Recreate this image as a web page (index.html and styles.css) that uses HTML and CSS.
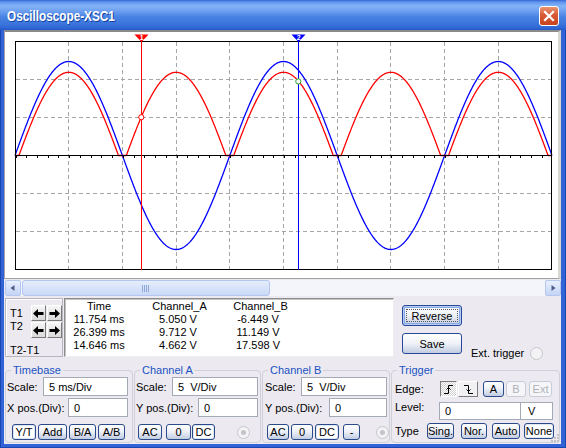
FILE: index.html
```html
<!DOCTYPE html>
<html>
<head>
<meta charset="utf-8">
<title>Oscilloscope-XSC1</title>
<link rel="stylesheet" href="styles.css">
</head>
<body>
<div class="window">
  <div class="titlebar">
    <span class="title">Oscilloscope-XSC1</span>
    <div class="close">
      <svg width="18" height="18" viewBox="0 0 18 18"><path d="M5 5 L13 13 M13 5 L5 13" stroke="#fff" stroke-width="2.2" stroke-linecap="square"/></svg>
    </div>
  </div>
  <div class="client">
    <div class="plot-panel">
      <svg class="plot" width="553" height="246" viewBox="5 32 553 246">
        <g stroke="#a6a6a6" stroke-width="1" stroke-dasharray="4 3" shape-rendering="crispEdges">
          <line x1="68.5" y1="42" x2="68.5" y2="270"/>
          <line x1="122.5" y1="42" x2="122.5" y2="270"/>
          <line x1="176.5" y1="42" x2="176.5" y2="270"/>
          <line x1="229.5" y1="42" x2="229.5" y2="270"/>
          <line x1="283.5" y1="42" x2="283.5" y2="270"/>
          <line x1="337.5" y1="42" x2="337.5" y2="270"/>
          <line x1="390.5" y1="42" x2="390.5" y2="270"/>
          <line x1="444.5" y1="42" x2="444.5" y2="270"/>
          <line x1="498.5" y1="42" x2="498.5" y2="270"/>
          <line x1="16" y1="79.5" x2="552" y2="79.5"/>
          <line x1="16" y1="117.5" x2="552" y2="117.5"/>
          <line x1="16" y1="193.5" x2="552" y2="193.5"/>
          <line x1="16" y1="231.5" x2="552" y2="231.5"/>
        </g>
        <path id="trB" fill="none" stroke="#0000ff" stroke-width="1.3"/>
        <path id="trA" fill="none" stroke="#ff0000" stroke-width="1.3"/>
        <g stroke="#000" shape-rendering="crispEdges" fill="none">
          <line x1="15" y1="155.5" x2="552" y2="155.5"/>
          <line x1="15.5" y1="157" x2="552" y2="157" stroke-width="2" stroke-dasharray="1 9.74"/>
          <rect x="15.5" y="41.5" width="536" height="228"/>
        </g>
        <line x1="141.5" y1="36" x2="141.5" y2="270" stroke="#ff0000" stroke-width="1" shape-rendering="crispEdges"/>
        <line x1="298.5" y1="36" x2="298.5" y2="270" stroke="#0000ff" stroke-width="1" shape-rendering="crispEdges"/>
        <polygon points="134.5,34.5 148.5,34.5 141.5,42" fill="#ff0000"/>
        <polygon points="291.5,34.5 305.5,34.5 298.5,42" fill="#0000ff"/>
        <text class="mk" x="141.6" y="40.2">1</text>
        <text class="mk" x="298.6" y="40.2">2</text>
        <circle cx="141.3" cy="117.2" r="2.6" fill="#fff" stroke="#ff0000" stroke-width="1"/>
        <circle cx="298.3" cy="81.4" r="2.6" fill="#fff" stroke="#22a022" stroke-width="1"/>
      </svg>
    </div>

    <div class="hscroll">
      <div class="sb-btn"><svg width="8" height="8" viewBox="0 0 8 8"><path d="M5.5 1 L1.5 4 L5.5 7 Z" fill="#4d5f86"/></svg></div>
      <div class="sb-track">
        <div class="sb-thumb"><span class="grip"></span></div>
      </div>
      <div class="sb-btn"><svg width="8" height="8" viewBox="0 0 8 8"><path d="M2.5 1 L6.5 4 L2.5 7 Z" fill="#4d5f86"/></svg></div>
    </div>

    <div class="meas">
      <div class="cursor-box">
        <span class="clabel">T1</span>
        <div class="abtn"><svg width="11" height="9" viewBox="0 0 11 9"><path d="M0 4.5 L5 0 L5 3 L10.5 3 L10.5 6 L5 6 L5 9 Z" fill="#000"/></svg></div>
        <div class="abtn"><svg width="11" height="9" viewBox="0 0 11 9"><path d="M11 4.5 L6 0 L6 3 L0.5 3 L0.5 6 L6 6 L6 9 Z" fill="#000"/></svg></div>
        <span class="clabel t2">T2</span>
        <div class="abtn"><svg width="11" height="9" viewBox="0 0 11 9"><path d="M0 4.5 L5 0 L5 3 L10.5 3 L10.5 6 L5 6 L5 9 Z" fill="#000"/></svg></div>
        <div class="abtn"><svg width="11" height="9" viewBox="0 0 11 9"><path d="M11 4.5 L6 0 L6 3 L0.5 3 L0.5 6 L6 6 L6 9 Z" fill="#000"/></svg></div>
        <span class="clabel diff">T2-T1</span>
      </div>
      <div class="readout">
        <div class="rrow"><span>Time</span><span class="ha">Channel_A</span><span class="hb">Channel_B</span></div>
        <div class="rrow"><span>11.754 ms</span><span>5.050 V</span><span>-6.449 V</span></div>
        <div class="rrow"><span>26.399 ms</span><span>9.712 V</span><span>11.149 V</span></div>
        <div class="rrow"><span>14.646 ms</span><span>4.662 V</span><span>17.598 V</span></div>
      </div>
      <div class="actions">
        <button class="pbtn focus">Reverse</button>
        <button class="pbtn">Save</button>
      </div>
      <div class="ext"><span>Ext. trigger</span><span class="radio"></span></div>
    </div>

    <div class="groups">
      <fieldset class="grp g-time">
        <legend>Timebase</legend>
        <div class="row"><span class="lbl">Scale:</span><input class="field w85" value="5 ms/Div" readonly></div>
        <div class="row"><span class="lbl">X pos.(Div):</span><input class="field w60" value="0" readonly></div>
        <div class="brow">
          <button class="btn sel w24">Y/T</button>
          <button class="btn w29 ml2">Add</button>
          <button class="btn w27 ml2">B/A</button>
          <button class="btn w27 ml2">A/B</button>
        </div>
      </fieldset>
      <fieldset class="grp g-cha">
        <legend>Channel A</legend>
        <div class="row"><span class="lbl">Scale:</span><input class="field w86" value="5  V/Div" readonly></div>
        <div class="row"><span class="lbl">Y pos.(Div):</span><input class="field w60" value="0" readonly></div>
        <div class="brow">
          <button class="btn w24">AC</button>
          <button class="btn w25 ml4">0</button>
          <button class="btn sel w23 ml1">DC</button>
          <span class="radio dot ml22"></span>
        </div>
      </fieldset>
      <fieldset class="grp g-chb">
        <legend>Channel B</legend>
        <div class="row"><span class="lbl">Scale:</span><input class="field w86" value="5  V/Div" readonly></div>
        <div class="row"><span class="lbl">Y pos.(Div):</span><input class="field w59" value="0" readonly></div>
        <div class="brow">
          <button class="btn w22">AC</button>
          <button class="btn w22 ml2">0</button>
          <button class="btn sel w24 ml2">DC</button>
          <button class="btn w17 ml4">-</button>
          <span class="radio dot ml16"></span>
        </div>
      </fieldset>
      <fieldset class="grp g-trig">
        <legend>Trigger</legend>
        <div class="trow r1">
          <span class="tlbl lw45">Edge:</span>
          <span class="ebtn down w17"><svg width="11" height="11" viewBox="0 0 11 11"><path d="M1 9.5 H5.5 V1.5 H10 M3.5 5.5 L5.5 3.5 L7.5 5.5" fill="none" stroke="#000" stroke-width="1"/></svg></span>
          <span class="ebtn up w20 ml1"><svg width="11" height="11" viewBox="0 0 11 11"><path d="M1 1.5 H5.5 V9.5 H10 M3.5 5.5 L5.5 7.5 L7.5 5.5" fill="none" stroke="#000" stroke-width="1"/></svg></span>
          <button class="btn w21 ml5">A</button>
          <button class="btn dis w20 ml2">B</button>
          <button class="btn dis w23 ml3">Ext</button>
        </div>
        <div class="trow r2">
          <span class="tlbl lw44 top">Level:</span>
          <input class="field lvl w82" value="0" readonly>
          <input class="field unit w33" value="V" readonly>
        </div>
        <div class="trow r3">
          <span class="tlbl lw32">Type</span>
          <button class="btn w27">Sing.</button>
          <button class="btn w26 ml7">Nor.</button>
          <button class="btn w28 ml5">Auto</button>
          <button class="btn sel w30 ml4">None</button>
        </div>
      </fieldset>
    </div>
    <svg class="resize" width="10" height="10" viewBox="0 0 10 10">
      <g fill="#c2c2c8">
        <rect x="7" y="1" width="2" height="2"/>
        <rect x="4" y="4" width="2" height="2"/><rect x="7" y="4" width="2" height="2"/>
        <rect x="1" y="7" width="2" height="2"/><rect x="4" y="7" width="2" height="2"/><rect x="7" y="7" width="2" height="2"/>
      </g>
    </svg>
  </div>
</div>
<script src="script.js"></script>
</body>
</html>
```

FILE: styles.css
```css
* { box-sizing: border-box; }
body {
  margin: 0;
  font-family: "Liberation Sans", Arial, sans-serif;
  font-size: 11px;
  color: #000;
  background: #fff;
}
.window {
  width: 566px;
  height: 448px;
  display: flex;
  flex-direction: column;
  background: #2f63d6;
  box-shadow: inset 1px 0 #1a46b2, inset -1px 0 #1a46b2, inset 0 -1px #1a46b2;
}
.titlebar {
  height: 30px;
  flex: none;
  display: flex;
  align-items: center;
  padding: 0 7px;
  background: linear-gradient(#3563d2 0, #5f95ee 2px, #84b3f6 6px, #6d9ff0 11px, #4882e2 17px, #3b75dc 24px, #2f66d4 28px, #2458c8 30px);
}
.title {
  display: inline-block;
  color: #fff;
  font-weight: bold;
  font-size: 14px;
  transform: scaleX(0.84);
  transform-origin: left center;
  text-shadow: 1px 1px 0 #123f9e;
  margin-top: 1px;
}
.close {
  margin-left: auto;
  margin-top: 2px;
  width: 20px;
  height: 20px;
  border: 1px solid #fff;
  border-radius: 3px;
  background: linear-gradient(#ea9474, #d85a33 45%, #c6431d);
  display: flex;
  align-items: center;
  justify-content: center;
}
.client {
  flex: 1;
  margin: 0 5px 4px 4px;
  background: #eceaf0;
  display: flex;
  flex-direction: column;
  position: relative;
}
.plot-panel {
  height: 249px;
  flex: none;
  background: #fff;
  border-top: 2px solid #8a8a8a;
  border-left: 1px solid #a6a6a6;
  border-right: 3px solid #d9d7d2;
  border-bottom: 1px solid #a0a0a0;
}
.plot { display: block; }
.mk {
  font-family: "Liberation Sans", Arial, sans-serif;
  font-size: 7px;
  font-weight: bold;
  fill: #fff;
  text-anchor: middle;
}

.hscroll {
  height: 16px;
  flex: none;
  margin: 1px 0 0 1px;
  display: flex;
}
.sb-btn {
  width: 16px;
  height: 16px;
  border: 1px solid #b6c7ee;
  border-radius: 2px;
  background: linear-gradient(#e9f0fd, #c4d4f6);
  display: flex;
  align-items: center;
  justify-content: center;
}
.sb-track {
  flex: 1;
  background: #f3f5fb;
  padding-left: 1px;
  display: flex;
}
.sb-thumb {
  width: 248px;
  border: 1px solid #b3c6f0;
  border-radius: 3px;
  background: linear-gradient(#e6eefc, #cad9f7);
  display: flex;
  align-items: center;
  justify-content: center;
}
.grip {
  width: 8px;
  height: 7px;
  background: repeating-linear-gradient(to right, #8ea6d8 0 1px, transparent 1px 2px);
}

.meas {
  height: 60px;
  flex: none;
  margin-top: 2px;
  padding-left: 1px;
  display: flex;
}
.cursor-box {
  width: 58px;
  height: 59px;
  border: 1px solid #b6b6be;
  box-shadow: inset 1px 1px #fff;
  display: grid;
  grid-template-columns: 20px 15px 15px;
  grid-template-rows: 16px 16px auto;
  column-gap: 1px;
  row-gap: 1px;
  padding: 6px 0 0 4px;
}
.clabel { line-height: 13px; align-self: center; }
.clabel.t2 { align-self: start; margin-top: -2px; }
.clabel.diff { grid-column: 1 / 4; padding-top: 5px; }
.abtn {
  width: 15px;
  height: 16px;
  border: 1px solid;
  border-color: #fff #7a7a7a #7a7a7a #fff;
  background: linear-gradient(#f5f5f5, #dadada);
  display: flex;
  align-items: center;
  justify-content: center;
}
.readout {
  width: 330px;
  height: 59px;
  margin-left: 1px;
  background: #fff;
  border: 1px solid;
  border-color: #8c8c8c #eeeeee #eeeeee #8c8c8c;
  box-shadow: inset 1px 1px #c4c4c4;
  padding-top: 1px;
}
.rrow {
  display: grid;
  grid-template-columns: 68px 90px 70px;
  line-height: 13px;
  text-align: center;
  white-space: nowrap;
}
.rrow .ha { padding-left: 3px; }
.rrow .hb { padding-left: 5px; }
.actions {
  margin-left: 8px;
  width: 60px;
  display: flex;
  flex-direction: column;
  gap: 7px;
  padding-top: 7px;
}
.pbtn {
  height: 21px;
  padding: 0;
  border: 1px solid #27489a;
  border-radius: 3px;
  background: linear-gradient(#ffffff, #eef1f7 50%, #c2cce1);
  font-family: "Liberation Sans", Arial, sans-serif;
  font-size: 11px;
  color: #000;
  position: relative;
}
.pbtn.focus {
  box-shadow: inset 0 0 0 1px #b7cdf2, inset 0 0 0 2px #86a8e8;
}
.pbtn.focus::after {
  content: "";
  position: absolute;
  left: 3px; top: 3px; right: 3px; bottom: 3px;
  border: 1px dotted #555;
}
.ext {
  margin-left: 9px;
  align-self: flex-end;
  margin-bottom: -2px;
  height: 14px;
  display: flex;
  align-items: center;
  gap: 6px;
  white-space: nowrap;
}
.radio {
  width: 13px;
  height: 13px;
  flex: none;
  border-radius: 50%;
  border: 1px solid #c6c6cc;
  background: #f3f3f5;
  display: flex;
  align-items: center;
  justify-content: center;
}
.radio.dot::after {
  content: "";
  width: 5px;
  height: 5px;
  border-radius: 50%;
  background: #c3c3c9;
}

.groups {
  display: flex;
  gap: 1px;
  margin-top: 6px;
  padding-left: 1px;
  flex: none;
}
.grp {
  margin: 0;
  padding: 0;
  height: 79px;
  min-width: 0;
  border: 1px solid #cfd0d8;
  border-radius: 4px;
}
.grp legend {
  color: #2152c3;
  padding: 0 2px;
  margin-left: 5px;
  line-height: 13px;
  font-size: 11px;
}
.g-time { width: 128px; }
.g-cha { width: 127px; }
.g-chb { width: 128px; }
.g-trig { width: 169px; }

.row {
  display: flex;
  align-items: center;
  height: 19px;
  padding-left: 1px;
}
.row + .row { margin-top: 2px; }
.g-time .row { padding-right: 4px; }
.g-cha .row, .g-chb .row { padding-right: 2px; }
.g-chb .row { padding-left: 2px; }
.lbl { white-space: nowrap; }
.field {
  margin-left: auto;
  height: 19px;
  border: 1px solid #a3aab6;
  background: #fff;
  font-family: "Liberation Sans", Arial, sans-serif;
  font-size: 11px;
  color: #000;
  padding: 0 0 0 5px;
  outline: none;
  white-space: pre;
}
.brow {
  display: flex;
  align-items: center;
  height: 16px;
  margin-top: 7px;
}
.g-time .brow { padding-left: 6px; }
.g-cha .brow { padding-left: 3px; }
.g-chb .brow { padding-left: 4px; }
.btn {
  height: 16px;
  padding: 0;
  border: 1px solid #2a4a8a;
  border-radius: 3px;
  background: linear-gradient(#ffffff, #eef1f8 45%, #c2cce2);
  font-family: "Liberation Sans", Arial, sans-serif;
  font-size: 11px;
  color: #000;
  line-height: 14px;
}
.btn.sel {
  background: #fff;
  box-shadow: inset 0 0 0 1px #dfe6f3;
}
.btn.dis {
  border-color: #c6ccd8;
  background: #f6f6f8;
  color: #aeb2ba;
}
.trow {
  display: flex;
  align-items: center;
  padding-left: 3px;
}
.trow.r1 { height: 16px; margin-top: 4px; }
.trow.r2 { height: 18px; margin-top: 5px; }
.trow.r3 { height: 16px; margin-top: 3px; }
.tlbl { white-space: nowrap; flex: none; }
.tlbl.top { align-self: flex-start; margin-top: -1px; }
.trow .field { margin-left: 0; height: 18px; }
.trow .field.unit { margin-left: -1px; padding-left: 7px; }
.ebtn {
  height: 16px;
  border: 1px solid;
  display: flex;
  align-items: center;
  justify-content: center;
}
.ebtn.down {
  border-color: #7c7c7c #fff #fff #7c7c7c;
  background: repeating-conic-gradient(#ffffff 0 25%, #d2d2d2 0 50%) 0 0 / 2px 2px;
}
.ebtn.up {
  border-color: #fff #7c7c7c #7c7c7c #fff;
  background: #f1f1f3;
}
.resize {
  position: absolute;
  right: 1px;
  bottom: 1px;
}

.w17 { width: 17px; } .w20 { width: 20px; } .w21 { width: 21px; } .w22 { width: 22px; }
.w23 { width: 23px; } .w24 { width: 24px; } .w25 { width: 25px; } .w26 { width: 26px; }
.w27 { width: 27px; } .w28 { width: 28px; } .w29 { width: 29px; } .w30 { width: 30px; }
.w33 { width: 33px; } .w59 { width: 58px; } .w60 { width: 60px; } .w82 { width: 82px; }
.w85 { width: 85px; } .w86 { width: 86px; }
.ml1 { margin-left: 1px; } .ml2 { margin-left: 2px; } .ml3 { margin-left: 3px; }
.ml4 { margin-left: 4px; } .ml5 { margin-left: 5px; } .ml7 { margin-left: 7px; }
.ml16 { margin-left: 16px; } .ml22 { margin-left: 22px; }
.lw32 { width: 32px; } .lw44 { width: 44px; } .lw45 { width: 45px; }
```

FILE: script.js
```js
(function () {
  var P = 214.8, A = 94, D = 10.8, X0 = 15, Y0 = 155.5;
  var b = '', a = '';
  for (var i = 0; i <= 1074; i++) {
    var x = 15 + i * 0.5;
    var v = A * Math.sin(2 * Math.PI * (x - X0) / P);
    var r = Math.max(0, Math.abs(v) - D);
    b += (i ? 'L' : 'M') + x.toFixed(1) + ' ' + (Y0 - v).toFixed(2);
    a += (i ? 'L' : 'M') + x.toFixed(1) + ' ' + (Y0 - r).toFixed(2);
  }
  document.getElementById('trB').setAttribute('d', b);
  document.getElementById('trA').setAttribute('d', a);
})();
```
